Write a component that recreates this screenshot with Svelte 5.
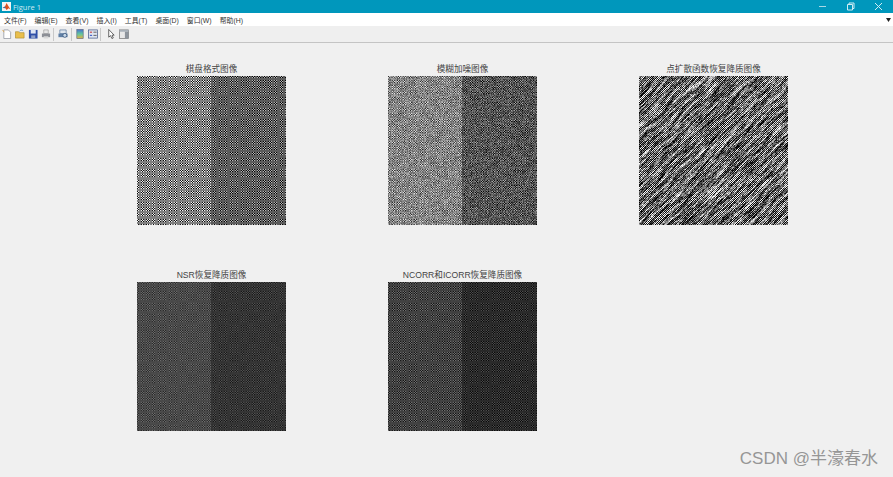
<script lang="ts">
  import { onMount } from "svelte";

  const menus = ["文件(F)", "编辑(E)", "查看(V)", "插入(I)", "工具(T)", "桌面(D)", "窗口(W)", "帮助(H)"];

  // lo/hi are the checker levels on each half, noise is added per pixel
  const plots = [
    { title: "棋盘格式图像", kind: "check", left: [15, 240], right: [5, 180], noise: 0 },
    { title: "模糊加噪图像", kind: "check", left: [70, 195], right: [28, 140], noise: 38 },
    { title: "点扩散函数恢复降质图像", kind: "streak", left: [0, 255], right: [0, 255], noise: 0 },
    { title: "NSR恢复降质图像", kind: "check", left: [42, 104], right: [26, 78], noise: 4 },
    { title: "NCORR和ICORR恢复降质图像", kind: "check", left: [22, 108], right: [10, 74], noise: 3 },
  ];

  let canvases: HTMLCanvasElement[] = [];

  function random(seed: number) {
    let s = seed;
    return () => {
      s = (s * 1664525 + 1013904223) >>> 0;
      return s / 4294967296;
    };
  }

  function drawCheck(ctx, plot, index) {
    const size = 149;
    const rnd = random(index * 77 + 5);
    const img = ctx.createImageData(size, size);
    const cell = 1.22;
    const sub = 2;
    for (let y = 0; y < size; y++) {
      for (let x = 0; x < size; x++) {
        const [lo, hi] = x < 74 ? plot.left : plot.right;
        let sum = 0;
        for (let j = 0; j < sub; j++) {
          for (let i = 0; i < sub; i++) {
            const cx = Math.floor((x + (i + 0.5) / sub) / cell);
            const cy = Math.floor((y + (j + 0.5) / sub) / cell);
            sum += (cx + cy) % 2 ? hi : lo;
          }
        }
        const v = sum / (sub * sub) + (rnd() - 0.5) * plot.noise * 2;
        const p = (y * size + x) * 4;
        img.data[p] = img.data[p + 1] = img.data[p + 2] = v;
        img.data[p + 3] = 255;
      }
    }
    ctx.putImageData(img, 0, 0);
  }

  function drawStreak(ctx) {
    const size = 149;
    const pad = 12;
    const full = size + pad * 2;
    const rnd = random(4242);
    const base = new Float32Array(full * full).map(() => rnd() - 0.5);
    const img = ctx.createImageData(size, size);
    for (let y = 0; y < size; y++) {
      for (let x = 0; x < size; x++) {
        let along = 0;
        for (let k = -4; k <= 4; k++) {
          along += base[(y + pad - k) * full + x + pad + k];
        }
        const wave = Math.sin((x + y) * 0.62 + Math.sin((x - y) * 0.09) * 2) * 0.22;
        const check = (x + y) % 2 ? 0.4 : -0.4;
        const raw = along * 0.42 + wave + check + (rnd() - 0.5) * 0.8;
        const v = Math.max(0, Math.min(255, 100 + raw * 150));
        const p = (y * size + x) * 4;
        img.data[p] = img.data[p + 1] = img.data[p + 2] = v;
        img.data[p + 3] = 255;
      }
    }
    ctx.putImageData(img, 0, 0);
  }

  onMount(() => {
    plots.forEach((plot, i) => {
      const ctx = canvases[i].getContext("2d");
      if (plot.kind === "streak") drawStreak(ctx);
      else drawCheck(ctx, plot, i);
    });
  });
</script>

<main class="window">
  <header class="titlebar">
    <svg class="logo" viewBox="0 0 9 9" width="9" height="9">
      <rect width="9" height="9" fill="#f4f4f4" />
      <path d="M0.5 6 L3 4.5 L4.6 1 L6 3.5 L8.5 7.5 L6.6 6.2 L4.6 8 L3.2 6 Z" fill="#d9501e" />
      <path d="M0.5 6 L3 4.5 L3.6 6.3 Z" fill="#2a6fb5" />
    </svg>
    <span class="caption">Figure 1</span>
    <div class="controls">
      <svg viewBox="0 0 9 9" width="9" height="9"><path d="M1 4.5H8" stroke="#a8d8e6" /></svg>
      <svg viewBox="0 0 9 9" width="9" height="9">
        <path d="M1.5 2.5H6.5V8H1.5ZM3 2.5V1H8V6.5H6.5" fill="none" stroke="#d0ecf3" />
      </svg>
      <svg viewBox="0 0 9 9" width="9" height="9"><path d="M1 1L8 8M8 1L1 8" stroke="#d0ecf3" /></svg>
    </div>
  </header>

  <nav class="menubar">
    {#each menus as menu}
      <span>{menu}</span>
    {/each}
    <svg class="more" viewBox="0 0 5 4" width="5" height="4"><path d="M0 0H5L2.5 4Z" fill="#222" /></svg>
  </nav>

  <div class="toolbar">
    <span class="tool">
      <svg viewBox="0 0 11 11"><path d="M2 1H7L9.5 3.5V10.5H2Z" fill="#fff" stroke="#8a8f9a" stroke-width=".8" /><path d="M0.5 1.5L2.5 3" stroke="#e8a030" /></svg>
    </span>
    <span class="tool">
      <svg viewBox="0 0 11 11"><path d="M0.5 3H4L5 4H10V10H0.5Z" fill="#e9bf4c" stroke="#a98a2c" stroke-width=".7" /><path d="M5 2.5C6 1 8 1 9 2" fill="none" stroke="#3f7fbf" stroke-width=".8" /></svg>
    </span>
    <span class="tool">
      <svg viewBox="0 0 11 11"><rect x="1" y="1" width="9.5" height="9.5" fill="#2f4fa8" /><rect x="3" y="1" width="5.5" height="4" fill="#dfe6f5" /><rect x="3.5" y="7" width="4.5" height="3.5" fill="#8fa0c8" /></svg>
    </span>
    <span class="tool">
      <svg viewBox="0 0 11 11"><path d="M3 1H8V5H3Z" fill="#e6e6e6" stroke="#8d8d8d" stroke-width=".6" /><path d="M1 5H10V9H1Z" fill="#8c8f96" /><path d="M3 8H8V10.5H3Z" fill="#d8d8d8" /></svg>
    </span>
    <i class="sep"></i>
    <span class="tool wide">
      <svg viewBox="0 0 11 11"><path d="M2 1H9V5H2Z" fill="#dfe6ee" stroke="#4f6f96" stroke-width=".7" /><path d="M0.5 5H10.5V9H0.5Z" fill="#5f7fa5" /><circle cx="7.5" cy="7" r="2.2" fill="#c8d8e8" stroke="#2f4f78" stroke-width=".8" /></svg>
    </span>
    <i class="sep"></i>
    <span class="tool">
      <svg viewBox="0 0 11 11">
        <defs>
          <linearGradient id="bar" x1="0" y1="0" x2="0" y2="1">
            <stop offset="0" stop-color="#4a6fd0" />
            <stop offset=".5" stop-color="#5fc8a0" />
            <stop offset="1" stop-color="#e8b040" />
          </linearGradient>
        </defs>
        <rect x="2" y="0.5" width="7" height="10" fill="url(#bar)" stroke="#5a6680" stroke-width=".7" />
      </svg>
    </span>
    <span class="tool">
      <svg viewBox="0 0 11 11"><rect x="0.5" y="1" width="10" height="9" fill="#dfe4f0" stroke="#46598a" stroke-width=".8" /><path d="M2 3.5H4.5" stroke="#c83a3a" stroke-width="1.2" /><path d="M2 7H4.5" stroke="#3a5ac8" stroke-width="1.2" /><path d="M6 3.5H9.5M6 7H9.5" stroke="#555" /></svg>
    </span>
    <i class="sep"></i>
    <span class="tool gap">
      <svg viewBox="0 0 11 11"><path d="M3 0.5V9L5 7.3L6.5 10.5L8 9.8L6.6 6.8H9Z" fill="#fff" stroke="#333" stroke-width=".8" /></svg>
    </span>
    <span class="tool">
      <svg viewBox="0 0 11 11"><rect x="0.5" y="1" width="10" height="9.5" fill="#e8e8e8" stroke="#666" stroke-width=".7" /><rect x="0.5" y="1" width="10" height="2" fill="#a8b0b8" /><rect x="6.5" y="3" width="4" height="7.5" fill="#8d949c" /></svg>
    </span>
  </div>

  <section class="figure">
    {#each plots as plot, i}
      <figure class="plot">
        <figcaption>{plot.title}</figcaption>
        <canvas bind:this={canvases[i]} width="149" height="149"></canvas>
      </figure>
    {/each}
  </section>

  <div class="watermark">CSDN @半濠春水</div>
</main>

<style>
  :global(body) {
    margin: 0;
    overflow: hidden;
    background: #f0f0f0;
  }

  .window {
    position: relative;
    height: 477px;
    overflow: hidden;
    background: #f0f0f0;
    font-family: "Liberation Sans", "Noto Sans CJK SC", sans-serif;
  }

  .titlebar {
    display: flex;
    align-items: center;
    height: 13px;
    padding-left: 2px;
    background: #0097bc;
    color: #cfeaf2;
    font-size: 7.5px;
  }

  .logo {
    margin-right: 2px;
  }

  .caption {
    font-family: "Open Sans", sans-serif;
  }

  .controls {
    display: flex;
    gap: 19px;
    margin-left: auto;
    margin-right: 10px;
  }

  .menubar {
    display: flex;
    align-items: center;
    gap: 8px;
    height: 13px;
    padding-left: 4px;
    background: #fff;
    color: #333;
    font-size: 6.9px;
    white-space: nowrap;
  }

  .more {
    margin-left: auto;
    margin-right: 2px;
    margin-top: 1px;
  }

  .toolbar {
    display: flex;
    align-items: center;
    height: 16px;
    background: #efefef;
    border-bottom: 1px solid #c4c4c4;
  }

  .tool {
    display: flex;
    align-items: center;
    justify-content: center;
    width: 13px;
    height: 16px;
  }

  .tool svg {
    width: 10px;
    height: 10px;
  }

  .tool.wide {
    margin: 0 1px;
  }

  .tool.gap {
    margin-left: 2px;
  }

  .sep {
    width: 1px;
    height: 13px;
    margin: 0 1px;
    background: #c8c8c8;
  }

  .figure {
    display: grid;
    grid-template-columns: repeat(3, 149px);
    column-gap: 102px;
    row-gap: 44px;
    padding: 20px 0 0 137px;
  }

  .plot {
    margin: 0;
    width: 149px;
  }

  figcaption {
    height: 13px;
    line-height: 13px;
    color: #444;
    font-size: 8.6px;
    text-align: center;
    white-space: nowrap;
  }

  canvas {
    display: block;
    width: 149px;
    height: 149px;
  }

  .watermark {
    position: absolute;
    right: 15px;
    bottom: 7px;
    color: #969696;
    font-size: 17px;
    line-height: 22px;
    white-space: nowrap;
  }
</style>
